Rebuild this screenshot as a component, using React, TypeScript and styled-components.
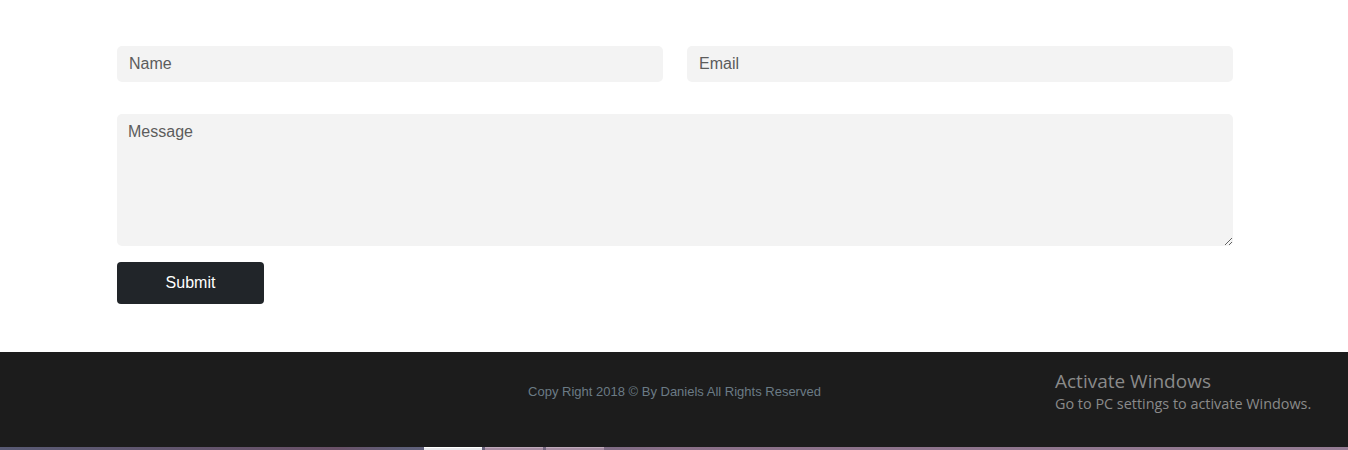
import React from "react";
import styled, { createGlobalStyle } from "styled-components";

const Global = createGlobalStyle`
  html, body { margin: 0; padding: 0; background: #fff; }
  body { font-family: "Liberation Sans", Arial, sans-serif; }
  * { box-sizing: border-box; }
`;

const Page = styled.div`
  width: 1348px;
  height: 450px;
  display: flex;
  flex-direction: column;
  overflow: hidden;
`;

const FormSection = styled.form`
  padding: 46px 115px 0 117px;
  height: 352px;
  display: flex;
  flex-direction: column;
`;

const Row = styled.div`
  display: grid;
  grid-template-columns: 546px 546px;
  column-gap: 24px;
`;

const Input = styled.input`
  height: 36px;
  border: none;
  border-radius: 5px;
  background: #f3f3f3;
  padding: 0 12px;
  font-family: "Liberation Sans", Arial, sans-serif;
  font-size: 16px;
  color: #333;
  outline: none;
  &::placeholder { color: #5c5c5c; }
`;

const TextArea = styled.textarea`
  margin-top: 32px;
  width: 1116px;
  height: 132px;
  border: none;
  border-radius: 5px;
  background: #f3f3f3;
  padding: 9px 11px;
  font-family: "Liberation Sans", Arial, sans-serif;
  font-size: 16px;
  color: #333;
  outline: none;
  resize: both;
  display: block;
  &::placeholder { color: #5c5c5c; }
`;

const SubmitButton = styled.button`
  margin-top: 16px;
  width: 147px;
  height: 42px;
  border: none;
  border-radius: 4px;
  background: #212529;
  color: #fff;
  font-family: "Liberation Sans", Arial, sans-serif;
  font-size: 16px;
  cursor: pointer;
`;

const Footer = styled.footer`
  position: relative;
  height: 95px;
  background: #1c1c1c;
  display: flex;
  align-items: flex-start;
  justify-content: center;
  padding-top: 32px;
`;

const Copy = styled.p`
  margin: 0;
  padding-left: 1px;
  font-size: 13px;
  line-height: 15px;
  color: #6b7b85;
`;

const Watermark = styled.div`
  position: absolute;
  left: 1055px;
  top: 19px;
  font-family: "Open Sans", "Noto Sans", sans-serif;
  color: #8a8a8a;
  line-height: 1.15;
`;

const WatermarkTitle = styled.div`
  font-size: 19px;
`;

const WatermarkSub = styled.div`
  font-size: 14.4px;
  margin-top: 3px;
`;

const Taskbar = styled.div`
  height: 3px;
  background: linear-gradient(90deg, #585a74 0%, #6a5168 25%, #5e607a 30%, #8a6f88 50%, #957c94 100%);
  display: flex;
  padding-left: 424px;
  gap: 3px;
`;

const TaskTab = styled.div<{ $active?: boolean }>`
  width: 58px;
  height: 3px;
  background: ${(p) => (p.$active ? "#e8e8ec" : "#a98ea4")};
  border-top: 1px solid ${(p) => (p.$active ? "#ffffff" : "#c0aabc")};
`;

export default function App() {
  return (
    <Page>
      <Global />
      <FormSection onSubmit={(e) => e.preventDefault()}>
        <Row>
          <Input type="text" placeholder="Name" />
          <Input type="email" placeholder="Email" />
        </Row>
        <TextArea placeholder="Message" />
        <SubmitButton type="submit">Submit</SubmitButton>
      </FormSection>
      <Footer>
        <Copy>Copy Right 2018 © By Daniels All Rights Reserved</Copy>
        <Watermark>
          <WatermarkTitle>Activate Windows</WatermarkTitle>
          <WatermarkSub>Go to PC settings to activate Windows.</WatermarkSub>
        </Watermark>
      </Footer>
      <Taskbar>
        <TaskTab $active />
        <TaskTab />
        <TaskTab />
      </Taskbar>
    </Page>
  );
}
